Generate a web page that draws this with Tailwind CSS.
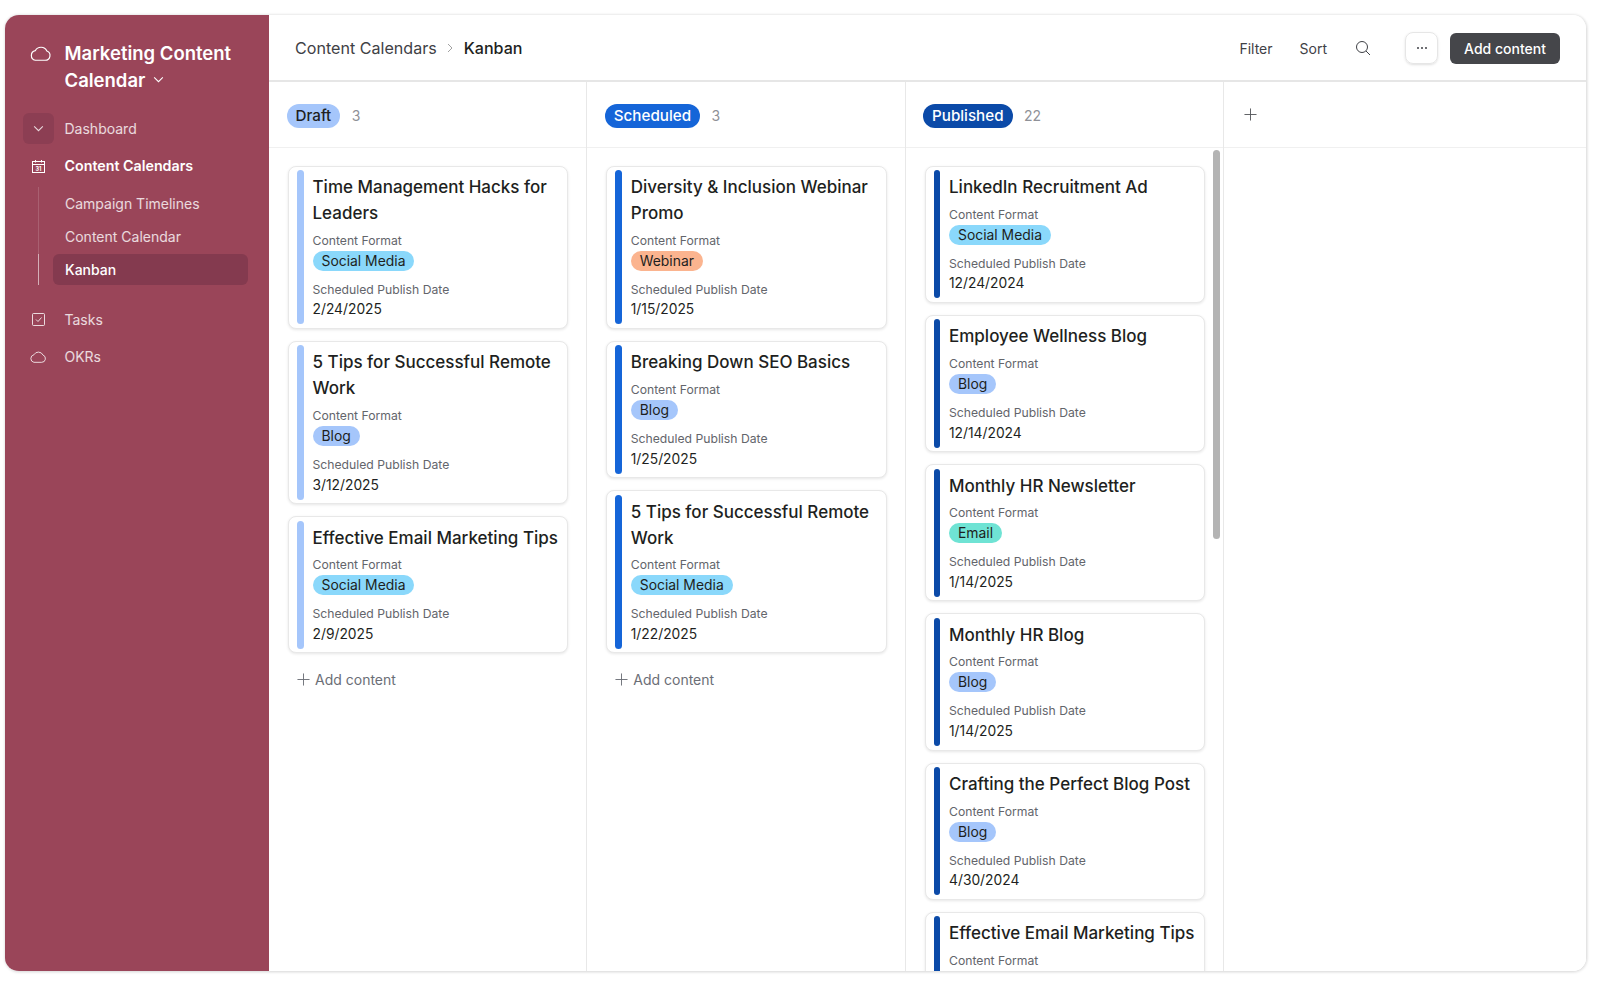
<!DOCTYPE html>
<html lang="en">
	<head>
		<meta charset="UTF-8" />
		<meta name="viewport" content="width=device-width, initial-scale=1.0" />
		<title>Kanban</title>
		<script src="https://cdn.jsdelivr.net/npm/@tailwindcss/browser@4"></script>
	</head>
	<body class="h-screen overflow-hidden bg-white font-['Inter',sans-serif] antialiased text-[#1e1f21]">
		<div class="pt-[15px] pl-[5px] pr-[13px]">
			<div class="flex h-[957px] overflow-hidden rounded-[14px] border border-[#e4e4e4] border-l-0 border-t-0 shadow-[0_0_3px_rgba(0,0,0,0.18)]">
				<aside class="w-[264px] shrink-0 bg-[#9a4559] text-white">
					<div class="flex pl-[24px] pt-[24.5px]">
						<svg class="mt-[2px] h-[23px] w-[23px] shrink-0" viewBox="0 0 22 22" fill="none" stroke="currentColor" stroke-width="1.1"><path d="M6 17.500h9.500a4.600 4.600 0 0 0 1.600-8.900A6.200 6.200 0 0 0 6 8.300a4.700 4.700 0 0 0 0 9.200Z" /></svg>
						<h1 class="ml-[12.5px] w-[190px] text-[18.5px]/[27px] font-semibold">Marketing Content Calendar <svg class="ml-[2px] inline h-[13px] w-[13px] align-[1px]" viewBox="0 0 12 12" fill="none" stroke="currentColor"><path d="m2 4 4 4 4-4" /></svg></h1>
					</div>
					<nav class="mt-[19.5px] text-[14px]">
						<div class="flex h-[31px] items-center pl-[17.5px] text-white/80">
							<span class="flex h-[31px] w-[31px] items-center justify-center rounded-md bg-[#8c3e53]"><svg class="h-[13px] w-[13px]" viewBox="0 0 12 12" fill="none" stroke="currentColor"><path d="m2 4 4 4 4-4" /></svg></span>
							<span class="ml-[11px]">Dashboard</span>
						</div>
						<div class="mt-[6px] flex h-[32px] items-center pl-[25.5px] text-[14.25px] font-semibold">
							<svg class="h-[15px] w-[15px] shrink-0" viewBox="0 0 15 15" fill="none" stroke="currentColor"><rect x="1.500" y="2.500" width="12" height="11" /><path d="M1.500 5.500h12M4.500 1v2.500M10.500 1v2.500" /><text x="7.500" y="11.800" text-anchor="middle" font-size="5.500" font-weight="700" fill="currentColor" stroke="none">31</text></svg>
							<span class="ml-[19px]">Content Calendars</span>
						</div>
						<div class="relative mt-[5px] ml-[33px] border-l border-white/15 pl-[14px]">
							<div class="absolute -left-px bottom-0 h-[31px] w-[1px] bg-white/50"></div>
							<a class="flex h-[33px] items-center pl-[12px] text-white/80">Campaign Timelines</a>
							<a class="flex h-[33px] items-center pl-[12px] text-white/80">Content Calendar</a>
							<a class="mt-[0.500px] flex h-[31px] w-[195px] items-center rounded-md bg-[#843a4f] pl-[12px] font-medium">Kanban</a>
						</div>
						<div class="mt-[19px] flex h-[32px] items-center pl-[25.5px] text-white/80">
							<svg class="h-[15px] w-[15px] shrink-0" viewBox="0 0 15 15" fill="none" stroke="currentColor"><rect x="1.500" y="1.500" width="12" height="12" rx="1" /><path d="m5 7.500 2 2 3.500-4" /></svg>
							<span class="ml-[19px]">Tasks</span>
						</div>
						<div class="mt-[5px] flex h-[32px] items-center pl-[23.5px] text-white/80">
							<svg class="h-[18px] w-[18px] shrink-0" viewBox="0 0 22 22" fill="none" stroke="currentColor" stroke-width="1.2"><path d="M6 17.500h9.500a4.600 4.600 0 0 0 1.600-8.900A6.200 6.200 0 0 0 6 8.300a4.700 4.700 0 0 0 0 9.200Z" /></svg>
							<span class="ml-[18px]">OKRs</span>
						</div>
					</nav>
				</aside>
				<main class="flex min-w-0 flex-1 flex-col bg-white">
					<header class="flex h-[66.500px] shrink-0 items-center border-b-2 border-[#e6e6e6] pl-[26px] pr-[26px] pt-[2px]">
						<span class="text-[16.100px] text-[#3f4146]">Content Calendars</span>
						<svg class="mx-[8.500px] h-[10px] w-[10px] text-[#a2a2a2]" viewBox="0 0 10 10" fill="none" stroke="currentColor"><path d="m3 1 4 4-4 4" /></svg>
						<span class="text-[16.100px] font-medium">Kanban</span>
						<div class="ml-auto flex items-center text-[14px] text-[#3f4146]">
							<span>Filter</span>
							<span class="ml-[27px]">Sort</span>
							<svg class="ml-[28px] h-[16px] w-[16px]" viewBox="0 0 16 16" fill="none" stroke="currentColor"><circle cx="7" cy="7" r="5.500" /><path d="m11 11 4 4" /></svg>
							<button class="ml-[34px] flex h-[32px] w-[33px] items-center justify-center rounded-lg border border-[#e6e6e6] shadow-sm"><svg class="h-[12px] w-[12px]" viewBox="0 0 12 12" fill="currentColor"><circle cx="2" cy="6" r="1" /><circle cx="6" cy="6" r="1" /><circle cx="10" cy="6" r="1" /></svg></button>
							<button class="ml-[12px] h-[31px] w-[110px] rounded-md bg-[#45464a] font-medium text-white">Add content</button>
						</div>
					</header>
					<div id="board" class="flex min-h-0 flex-1 overflow-hidden"></div>
				</main>
			</div>
		</div>
		<script>
			const pills = {
				"Social Media": "bg-[#8ad8fb]",
				Blog: "bg-[#a5c6fb]",
				Webinar: "bg-[#fbb48f]",
				Email: "bg-[#6fe3d4]",
			};

			const columns = [
				{
					name: "Draft",
					count: 3,
					pill: "bg-[#a5c6fb] text-[#1e1f21]",
					bar: "bg-[#a5c6fb]",
					add: true,
					cards: [
						["Time Management Hacks for Leaders", "Social Media", "2/24/2025"],
						["5 Tips for Successful Remote Work", "Blog", "3/12/2025"],
						["Effective Email Marketing Tips", "Social Media", "2/9/2025"],
					],
				},
				{
					name: "Scheduled",
					count: 3,
					pill: "bg-[#1565d8] text-white",
					bar: "bg-[#1565d8]",
					add: true,
					cards: [
						["Diversity & Inclusion Webinar Promo", "Webinar", "1/15/2025"],
						["Breaking Down SEO Basics", "Blog", "1/25/2025"],
						["5 Tips for Successful Remote Work", "Social Media", "1/22/2025"],
					],
				},
				{
					name: "Published",
					count: 22,
					pill: "bg-[#0b4aa8] text-white",
					bar: "bg-[#0b4aa8]",
					scroll: true,
					cards: [
						["LinkedIn Recruitment Ad", "Social Media", "12/24/2024"],
						["Employee Wellness Blog", "Blog", "12/14/2024"],
						["Monthly HR Newsletter", "Email", "1/14/2025"],
						["Monthly HR Blog", "Blog", "1/14/2025"],
						["Crafting the Perfect Blog Post", "Blog", "4/30/2024"],
						["Effective Email Marketing Tips", "Social Media", "1/3/2025"],
					],
				},
			];

			const card = (c, bar) => `
				<div class="flex shrink-0 rounded-lg border border-[#e8e8e8] bg-white p-[3.500px] pl-[8px] shadow-[0_1px_3px_rgba(0,0,0,0.1)]">
					<div class="w-[6.500px] shrink-0 rounded-full ${bar}"></div>
					<div class="ml-[9px] min-w-0 flex-1 pb-[5px] pt-[4px]">
						<div class="text-[17px]/[26px] font-[450]">${c[0].replace("&", "&amp;")}</div>
						<div class="mt-[6.500px] text-[12.200px]/[16px] text-[#63656b]">Content Format</div>
						<span class="mt-[2px] block h-[20px] w-fit rounded-full px-[9px] text-[13.900px]/[20px] ${pills[c[1]]}">${c[1]}</span>
						<div class="mt-[11px] text-[12.200px]/[16px] text-[#63656b]">Scheduled Publish Date</div>
						<div class="mt-[1.800px] text-[13.800px]/[20px]">${c[2]}</div>
					</div>
				</div>`;

			const plus = `<svg class="h-[13px] w-[13px] shrink-0" viewBox="0 0 14 14" fill="none" stroke="currentColor"><path d="M7 .5v13M.5 7h13" /></svg>`;

			document.getElementById("board").innerHTML =
				columns
					.map(
						(col) => `
				<section class="relative flex w-[318.250px] shrink-0 flex-col border-r border-[#e8e8e8]">
					<div class="flex h-[66px] shrink-0 items-center border-b border-[#f0f0f0] pl-[17.500px] pt-[2px]">
						<span class="mt-[1px] rounded-full px-[9px] text-[15.200px]/[24px] font-medium ${col.pill}">${col.name}</span>
						<span class="ml-[11.500px] text-[14px] text-[#8f9197]">${col.count}</span>
					</div>
					<div class="flex flex-col gap-[12px] overflow-hidden pl-[19px] pr-[18px] pt-[18px]">
						${col.cards.map((c) => card(c, col.bar)).join("")}
						${col.add ? `<div class="flex h-[28px] items-center pl-[9px] text-[14px] text-[#6b6e76]">${plus}<span class="ml-[5px]">Add content</span></div>` : ""}
					</div>
					${col.scroll ? `<div class="absolute right-[3px] top-[68px] h-[389px] w-[6.500px] rounded-full bg-[#b4b4b4]"></div>` : ""}
				</section>`,
					)
					.join("") +
				`<section class="min-w-0 flex-1">
					<div class="flex h-[66px] items-center border-b border-[#f0f0f0] pl-[20px] text-[#55575c]">${plus}</div>
				</section>`;
		</script>
	</body>
</html>
